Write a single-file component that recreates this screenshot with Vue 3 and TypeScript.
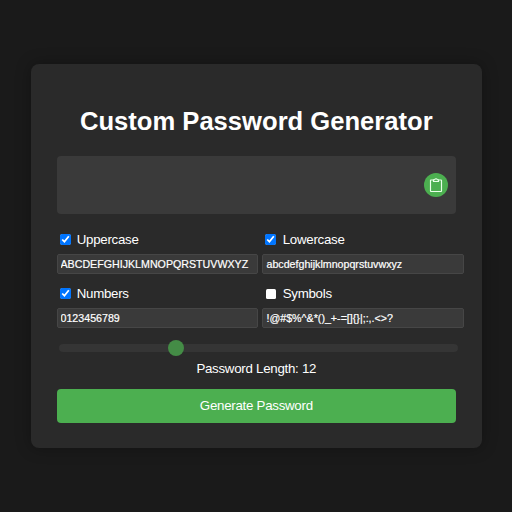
<script setup lang="ts">
import { reactive, ref } from 'vue'

interface CharacterSet {
  id: string
  label: string
  enabled: boolean
  characters: string
}

const sets = reactive<CharacterSet[]>([
  { id: 'upper', label: 'Uppercase', enabled: true, characters: 'ABCDEFGHIJKLMNOPQRSTUVWXYZ' },
  { id: 'lower', label: 'Lowercase', enabled: true, characters: 'abcdefghijklmnopqrstuvwxyz' },
  { id: 'numbers', label: 'Numbers', enabled: true, characters: '0123456789' },
  { id: 'symbols', label: 'Symbols', enabled: false, characters: '!@#$%^&*()_+-=[]{}|;:,.<>?' },
])
const length = ref<number>(12)
const password = ref<string>('')

function generate(): void {
  const pool = sets.filter((s) => s.enabled).map((s) => s.characters).join('')
  if (!pool) {
    password.value = ''
    return
  }
  const values = crypto.getRandomValues(new Uint32Array(Number(length.value)))
  password.value = Array.from(values, (v) => pool[v % pool.length]).join('')
}

function copy(): void {
  if (password.value) void navigator.clipboard.writeText(password.value)
}
</script>

<template>
  <main class="page">
    <section class="card">
      <h1 class="title">Custom Password Generator</h1>

      <div class="display">
        <span class="password">{{ password }}</span>
        <button class="copy" type="button" @click="copy">
          <svg width="14" height="16" viewBox="0 0 14 16" fill="none" stroke="#e9ffe9" stroke-width="1.15">
            <path d="M4.4 3H2Q1.5 3 1.5 3.5V14Q1.5 14.5 2 14.5H12Q12.5 14.5 12.5 14V3.5Q12.5 3 12 3H9.6" />
            <path d="M4.5 4.5V2.7H5.7Q6 1.7 7 1.7T8.3 2.7H9.5V4.5z" />
          </svg>
        </button>
      </div>

      <div class="options">
        <div v-for="set in sets" :key="set.id" class="option">
          <label class="label">
            <input v-model="set.enabled" class="check" type="checkbox" />
            <span>{{ set.label }}</span>
          </label>
          <input v-model="set.characters" class="chars" type="text" spellcheck="false" />
        </div>
      </div>

      <input v-model="length" class="slider" type="range" min="4" max="32" />
      <div class="length">Password Length: {{ length }}</div>
      <button class="generate" type="button" @click="generate">Generate Password</button>
    </section>
  </main>
</template>

<style>
body {
  background: #1a1a1a;
}
</style>

<style scoped>
.page {
  box-sizing: border-box;
  display: flex;
  align-items: center;
  justify-content: center;
  height: 512px;
  padding-left: 0.6px;
  font-family: 'Liberation Sans', Arial, sans-serif;
  color: #fff;
}

.card {
  box-sizing: border-box;
  width: 450.6px;
  height: 384px;
  padding: 25.5px;
  border-radius: 8px;
  background: #2a2a2a;
  box-shadow: 0 0 16px rgba(0, 0, 0, 0.3);
}

.title {
  margin: 16px 0 20px;
  font-size: 25.6px;
  line-height: 30px;
  text-align: center;
  white-space: nowrap;
}

.display {
  box-sizing: border-box;
  display: flex;
  align-items: center;
  justify-content: space-between;
  height: 58px;
  padding: 0 8px 0 16px;
  border-radius: 4px;
  background: #3a3a3a;
}

.password {
  font-size: 16px;
}

.copy {
  display: flex;
  align-items: center;
  justify-content: center;
  width: 24px;
  height: 24px;
  padding: 0;
  border: 0;
  border-radius: 50%;
  background: #4caf50;
}

.options {
  display: grid;
  grid-template-columns: 201.6px 201.6px;
  column-gap: 4.4px;
  row-gap: 8px;
  margin-top: 14px;
}

.option {
  height: 46px;
}

.label {
  display: flex;
  align-items: center;
  height: 23px;
  font-size: 13.3px;
  letter-spacing: -0.27px;
}

.check {
  flex: none;
  width: 11px;
  height: 11px;
  margin: 1px 6.2px 0 3px;
}

.check:not(:checked) {
  width: 10px;
  height: 10px;
  margin: 1px 6.7px 0 3.5px;
  border-radius: 1.5px;
  background: #fff;
  appearance: none;
}

.chars {
  display: block;
  box-sizing: border-box;
  width: 201.6px;
  height: 20px;
  margin-top: 3.3px;
  padding: 0 3px;
  border: 1px solid #464646;
  border-radius: 2px;
  outline: 0;
  background: #3a3a3a;
  color: #fff;
  font-family: inherit;
  font-size: 10.67px;
  -webkit-text-stroke: 0.2px #fff;
}

.slider {
  display: block;
  width: 399px;
  height: 8px;
  margin: 16px 0 0 2px;
  border-radius: 4px;
  outline: 0;
  background: #353535;
  appearance: none;
}

.slider::-webkit-slider-thumb {
  width: 16px;
  height: 16px;
  border-radius: 50%;
  background: #448c46;
  appearance: none;
}

.length {
  margin-top: 9px;
  font-size: 13.3px;
  letter-spacing: -0.27px;
  line-height: 16px;
  text-align: center;
}

.generate {
  display: block;
  width: 100%;
  height: 34px;
  margin-top: 12px;
  padding: 0;
  border: 0;
  border-radius: 4px;
  background: #4caf50;
  color: #fff;
  font-family: inherit;
  font-size: 13.3px;
  letter-spacing: -0.27px;
}
</style>
